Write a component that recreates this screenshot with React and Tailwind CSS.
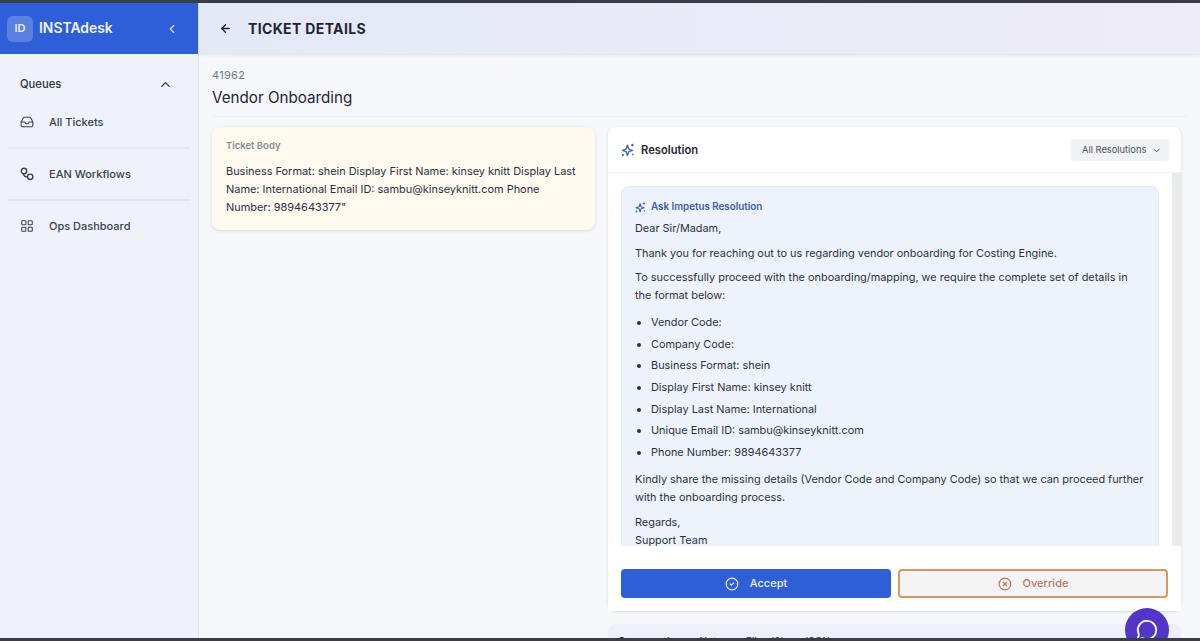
import { ChevronLeft, ChevronUp, ChevronDown, ArrowLeft, Inbox, LayoutGrid, CircleCheck, CircleX, MessageCircle } from 'lucide-react';

// two linked rings, the EAN Workflows icon
const LinkedRings = ({ className }) => (
  <svg viewBox="0 0 14 14" fill="none" stroke="currentColor" strokeWidth="1.4" className={className}>
    <circle cx="4" cy="4" r="2.7" />
    <circle cx="10.2" cy="9.8" r="2.7" />
    <path d="M3.4 6.8 C3.6 9 5 9.8 7.4 9.8" />
  </svg>
);

const SparkDots = ({ className }) => (
  <svg viewBox="0 0 16 16" fill="none" stroke="currentColor" className={className}>
    <path d="M7.4 2.6 L8.9 6.9 L13.2 8.4 L8.9 9.9 L7.4 14.2 L5.9 9.9 L1.6 8.4 L5.9 6.9 Z" strokeWidth="1.6" strokeLinejoin="round" />
    <path d="M13 0.8 V4 M11.4 2.4 H14.6" strokeWidth="1.3" />
    <circle cx="2.2" cy="13.8" r="1.3" fill="currentColor" stroke="none" />
    <circle cx="13.6" cy="13" r="1" fill="currentColor" stroke="none" />
  </svg>
);

const navItems = [
  { label: 'All Tickets', icon: Inbox },
  { label: 'EAN Workflows', icon: LinkedRings },
  { label: 'Ops Dashboard', icon: LayoutGrid },
];

const details = [
  'Vendor Code:',
  'Company Code:',
  'Business Format: shein',
  'Display First Name: kinsey knitt',
  'Display Last Name: International',
  'Unique Email ID: sambu@kinseyknitt.com',
  'Phone Number: 9894643377',
];

const Sidebar = () => (
  <aside className="w-[199px] shrink-0 flex flex-col bg-[#eff2f8] border-r border-[#dfe3ea]">
    <div className="h-[51px] shrink-0 bg-[#2f5fd8] flex items-center pl-[7px] pr-[19px]">
      <div className="w-[26px] h-[26px] rounded-md bg-[#5a80e2] flex items-center justify-center text-[11px] font-semibold text-[#e6ecfb]">ID</div>
      <span className="ml-[6px] text-[13.9px] font-semibold text-[#f2f5fd] flex-1">INSTAdesk</span>
      <ChevronLeft className="w-[14px] h-[14px] text-[#d5e0f8]" />
    </div>
    <div className="flex items-center justify-between pl-[20px] pr-[25px] mt-[20px] h-[20px]">
      <span className="text-[11.2px] font-medium text-[#2b3240]">Queues</span>
      <ChevronUp className="w-[15px] h-[15px] text-[#2b3240]" />
    </div>
    <nav className="mt-[3px] px-[8px]">
      {navItems.map((item, i) => (
        <div key={item.label} className={`h-[52px] flex items-center pl-[12px] border-b-2 ${i < 2 ? 'border-[#e4e7ee]' : 'border-transparent'}`}>
          <item.icon className="w-[14px] h-[14px] text-[#3a4250]" strokeWidth={1.8} />
          <span className="ml-[15px] text-[11px] font-medium text-[#3a4250]">{item.label}</span>
        </div>
      ))}
    </nav>
  </aside>
);

const ResolutionCard = () => (
  <div className="rounded-lg bg-white shadow-[0_1px_3px_rgba(30,40,70,0.14)] flex flex-col h-[484px]">
    <div className="h-[46px] shrink-0 flex items-center pl-[13px] pr-[12px] pt-[1px] border-b border-[#eef0f4]">
      <SparkDots className="w-[14px] h-[14px] text-[#4a68a8]" />
      <span className="ml-[6px] text-[11.2px] font-semibold text-[#1f2530] flex-1">Resolution</span>
      <div className="w-[98px] h-[22px] rounded bg-[#f1f2f4] flex items-center justify-between pl-[11px] pr-[7px] text-[9.3px] whitespace-nowrap text-[#4a505c]">
        All Resolutions
        <ChevronDown className="w-[11px] h-[11px]" />
      </div>
    </div>
    <div className="flex-1 min-h-0 overflow-hidden flex pl-[13px]">
      <div className="flex-1 min-w-0 pt-[13px]">
        <div className="w-[538px] h-[400px] rounded-t-lg bg-[#eef2fb] border border-[#e6eaf3] pt-[13px] px-[13px] text-[10.9px] leading-[18px] text-[#2c323d]">
          <div className="flex items-center text-[#3e5ba6] text-[9.8px] font-semibold h-[14px]">
            <SparkDots className="w-[11px] h-[11px] mr-[5px]" />
            Ask Impetus Resolution
          </div>
          <p className="mt-[5px]">Dear Sir/Madam,</p>
          <p className="mt-[7px]">Thank you for reaching out to us regarding vendor onboarding for Costing Engine.</p>
          <p className="mt-[6px]">To successfully proceed with the onboarding/mapping, we require the complete set of details in the format below:</p>
          <ul className="mt-[9px] list-disc pl-[16px] space-y-[3.7px]">
            {details.map((d) => (
              <li key={d}>{d}</li>
            ))}
          </ul>
          <p className="mt-[9px]">Kindly share the missing details (Vendor Code and Company Code) so that we can proceed further with the onboarding process.</p>
          <p className="mt-[7px]">Regards,</p>
          <p>Support Team</p>
        </div>
      </div>
      <div className="w-[9px] bg-[#e9eaec]" />
    </div>
    <div className="h-[65px] shrink-0 grid grid-cols-2 gap-[7px] pl-[13px] pr-[13px] pt-[23px] pb-[13px] bg-white">
      <button className="h-[29px] rounded bg-[#2f5fd8] flex items-center justify-center gap-[9px] text-[11px] font-medium text-[#e9eefb]">
        <CircleCheck className="w-[14px] h-[14px]" />
        <span className="ml-[2px]">Accept</span>
      </button>
      <button className="h-[29px] rounded bg-[#f3f3f4] border-2 border-[#d9985f] flex items-center justify-center gap-[9px] text-[11px] font-medium text-[#b47a5a]">
        <CircleX className="w-[14px] h-[14px]" />
        <span className="ml-[2px]">Override</span>
      </button>
    </div>
  </div>
);

export default function App() {
  return (
    <div className="relative w-[1200px] h-[641px] overflow-hidden flex flex-col bg-[#f6f7fa] font-['Inter',sans-serif]">
      <div className="h-[3px] shrink-0 bg-[#3a3d45]" />
      <div className="flex-1 min-h-0 flex">
        <Sidebar />
        <main className="flex-1 min-w-0 flex flex-col">
          <header className="h-[51px] shrink-0 flex items-center pl-[20px] bg-gradient-to-r from-[#e3e9f5] to-[#efecf9] shadow-[0_1px_3px_rgba(30,40,70,0.12)]">
            <ArrowLeft className="w-[13px] h-[13px] text-[#1f2530]" strokeWidth={2.4} />
            <h1 className="ml-[16px] text-[14px] font-bold tracking-[0.35px] text-[#1f2530]">TICKET DETAILS</h1>
          </header>
          <div className="flex-1 min-h-0 overflow-hidden px-[13px] pt-[14px]">
            <div className="text-[11px] leading-[14px] text-[#747a85] tracking-[0.3px]">41962</div>
            <h2 className="mt-[6px] text-[15.2px] leading-[20px] font-normal text-[#1f2530]">Vendor Onboarding</h2>
            <div className="mt-[8px] h-px bg-[#eceef2]" />
            <div className="mt-[10px] flex gap-[13px] items-start">
              <div className="w-[383px] h-[103px] shrink-0 rounded-lg bg-[#fdf9ef] shadow-[0_1px_3px_rgba(30,40,70,0.14)] pt-[13px] pl-[14px] pr-[10px]">
                <div className="text-[9.5px] leading-[12px] font-semibold text-[#8a8d92]">Ticket Body</div>
                <p className="mt-[10px] text-[10.95px] leading-[18px] text-[#2c323d]">Business Format: shein Display First Name: kinsey knitt Display Last Name: International Email ID: sambu@kinseyknitt.com Phone Number: 9894643377"</p>
              </div>
              <div className="w-[573px] shrink-0">
                <ResolutionCard />
                <div className="mt-[13px] h-[40px] rounded-t-lg bg-[#efeff8] pt-[10px] pl-[10px] flex gap-[18px] text-[10px] font-medium text-[#4a505c]">
                  <span className="text-[#1f2530]">Conversation</span>
                  <span>Notes</span>
                  <span>Files (0)</span>
                  <span>JSON</span>
                </div>
              </div>
            </div>
          </div>
        </main>
      </div>
      <div className="absolute left-[1125px] top-[608px] w-[44px] h-[44px] rounded-full bg-[#5335c8] flex items-center justify-center">
        <MessageCircle className="w-[22px] h-[22px] text-white" />
      </div>
      <div className="absolute left-0 right-0 bottom-0 h-[3px] bg-[#3a3d45]" />
    </div>
  );
}
